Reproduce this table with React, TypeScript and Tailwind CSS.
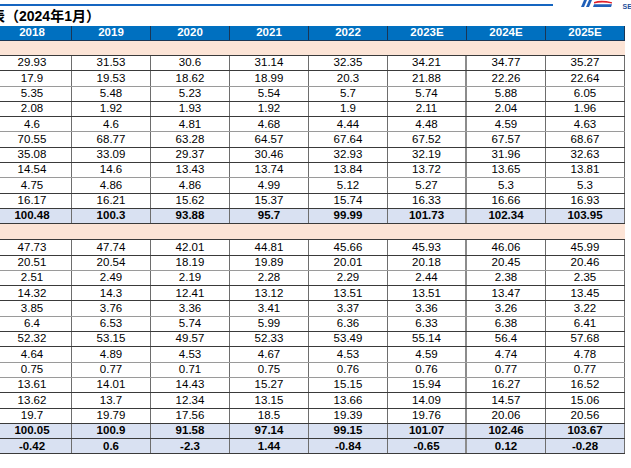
import React from "react";

const years = ["2018", "2019", "2020", "2021", "2022", "2023E", "2024E", "2025E"];

const sec1: string[][] = [
  ["29.93", "31.53", "30.6", "31.14", "32.35", "34.21", "34.77", "35.27"],
  ["17.9", "19.53", "18.62", "18.99", "20.3", "21.88", "22.26", "22.64"],
  ["5.35", "5.48", "5.23", "5.54", "5.7", "5.74", "5.88", "6.05"],
  ["2.08", "1.92", "1.93", "1.92", "1.9", "2.11", "2.04", "1.96"],
  ["4.6", "4.6", "4.81", "4.68", "4.44", "4.48", "4.59", "4.63"],
  ["70.55", "68.77", "63.28", "64.57", "67.64", "67.52", "67.57", "68.67"],
  ["35.08", "33.09", "29.37", "30.46", "32.93", "32.19", "31.96", "32.63"],
  ["14.54", "14.6", "13.43", "13.74", "13.84", "13.72", "13.65", "13.81"],
  ["4.75", "4.86", "4.86", "4.99", "5.12", "5.27", "5.3", "5.3"],
  ["16.17", "16.21", "15.62", "15.37", "15.74", "16.33", "16.66", "16.93"],
];
const sec1Total = ["100.48", "100.3", "93.88", "95.7", "99.99", "101.73", "102.34", "103.95"];

const sec2: string[][] = [
  ["47.73", "47.74", "42.01", "44.81", "45.66", "45.93", "46.06", "45.99"],
  ["20.51", "20.54", "18.19", "19.89", "20.01", "20.18", "20.45", "20.46"],
  ["2.51", "2.49", "2.19", "2.28", "2.29", "2.44", "2.38", "2.35"],
  ["14.32", "14.3", "12.41", "13.12", "13.51", "13.51", "13.47", "13.45"],
  ["3.85", "3.76", "3.36", "3.41", "3.37", "3.36", "3.26", "3.22"],
  ["6.4", "6.53", "5.74", "5.99", "6.36", "6.33", "6.38", "6.41"],
  ["52.32", "53.15", "49.57", "52.33", "53.49", "55.14", "56.4", "57.68"],
  ["4.64", "4.89", "4.53", "4.67", "4.53", "4.59", "4.74", "4.78"],
  ["0.75", "0.77", "0.71", "0.75", "0.76", "0.76", "0.77", "0.77"],
  ["13.61", "14.01", "14.43", "15.27", "15.15", "15.94", "16.27", "16.52"],
  ["13.62", "13.7", "12.34", "13.15", "13.66", "14.09", "14.57", "15.06"],
  ["19.7", "19.79", "17.56", "18.5", "19.39", "19.76", "20.06", "20.56"],
];
const sec2Totals = [
  ["100.05", "100.9", "91.58", "97.14", "99.15", "101.07", "102.46", "103.67"],
  ["-0.42", "0.6", "-2.3", "1.44", "-0.84", "-0.65", "0.12", "-0.28"],
];

function Row({ cells, bold, grey }: { cells: string[]; bold?: boolean; grey?: boolean }) {
  return (
    <div
      className={
        "flex h-[15.3px] border-b " +
        (grey ? "border-[#9a9a9a] " : "border-[#3a3a3a] ") +
        (bold ? "bg-[#d9e1f2] font-bold" : "bg-white")
      }
    >
      {cells.map((c, i) => (
        <div
          key={i}
          className={
            "w-[79px] shrink-0 flex items-center justify-center leading-none border-r " +
            (i === 5 ? "border-r-2 border-[#8c8c8c]" : "border-[#6e6e6e]")
          }
        >
          {c}
        </div>
      ))}
    </div>
  );
}

function Logo() {
  return (
    <div className="flex items-start gap-[8px]">
      <svg width="34" height="10" viewBox="0 0 34 10">
        <polygon points="3,0 6,0 3,7 0,7" fill="#1f5fb8" />
        <polygon points="8,0 11,0 8,7 5,7" fill="#1f5fb8" />
        <path d="M13 2 Q20 -0.5 31 2.2 L31 3.6 Q21 1.6 13 3.6 Z" fill="#e0202a" />
        <polygon points="13,4.2 31,4.2 30,7 12,7" fill="#1f5fb8" />
      </svg>
      <span
        className="text-[7px] font-bold leading-none text-[#1f4f9a] mt-[3px]"
        style={{ fontFamily: '"Liberation Sans", Arial, sans-serif' }}
      >
        SEA
      </span>
    </div>
  );
}

export default function App() {
  return (
    <div
      className="w-[631px] h-[468px] bg-white overflow-hidden text-black"
      style={{ fontFamily: '"Liberation Sans", Arial, "Noto Sans CJK SC", sans-serif' }}
    >
      <div className="flex h-[26px] justify-between">
        <div className="w-[553px] flex flex-col overflow-hidden">
          <div className="h-[4px]" />
          <div className="h-[2px] bg-[#1565c0]" />
          <div className="h-[20px] flex items-center -ml-[9px]">
            <span className="text-[14px] font-bold leading-none whitespace-nowrap">
              表（2024年1月）
            </span>
          </div>
        </div>
        <div className="-mr-[6px]">
          <Logo />
        </div>
      </div>

      <div className="w-[631px] overflow-hidden text-[11.5px]">
        <div className="-ml-[7px] w-[632px]">
          <div className="flex h-[15px] bg-[#0070c0] border-b border-[#1b3654] text-white font-bold">
            {years.map((y) => (
              <div
                key={y}
                className="w-[79px] shrink-0 flex items-center justify-center leading-none border-r border-[#1b3654]"
              >
                {y}
              </div>
            ))}
          </div>
          <div className="h-[15px] bg-[#fce4d6] border-b border-[#3a3a3a] w-[632px]" />
          {sec1.map((r, i) => (
            <Row key={i} cells={r} grey={i === 1 || i === 4 || i === 7} />
          ))}
          <Row cells={sec1Total} bold />
          <div className="h-[16px] bg-[#fce4d6] border-b border-[#3a3a3a] w-[632px]" />
          {sec2.map((r, i) => (
            <Row key={i} cells={r} grey={i === 1 || i === 4 || i === 7 || i === 8} />
          ))}
          {sec2Totals.map((r, i) => (
            <Row key={i} cells={r} bold />
          ))}
        </div>
      </div>
    </div>
  );
}
